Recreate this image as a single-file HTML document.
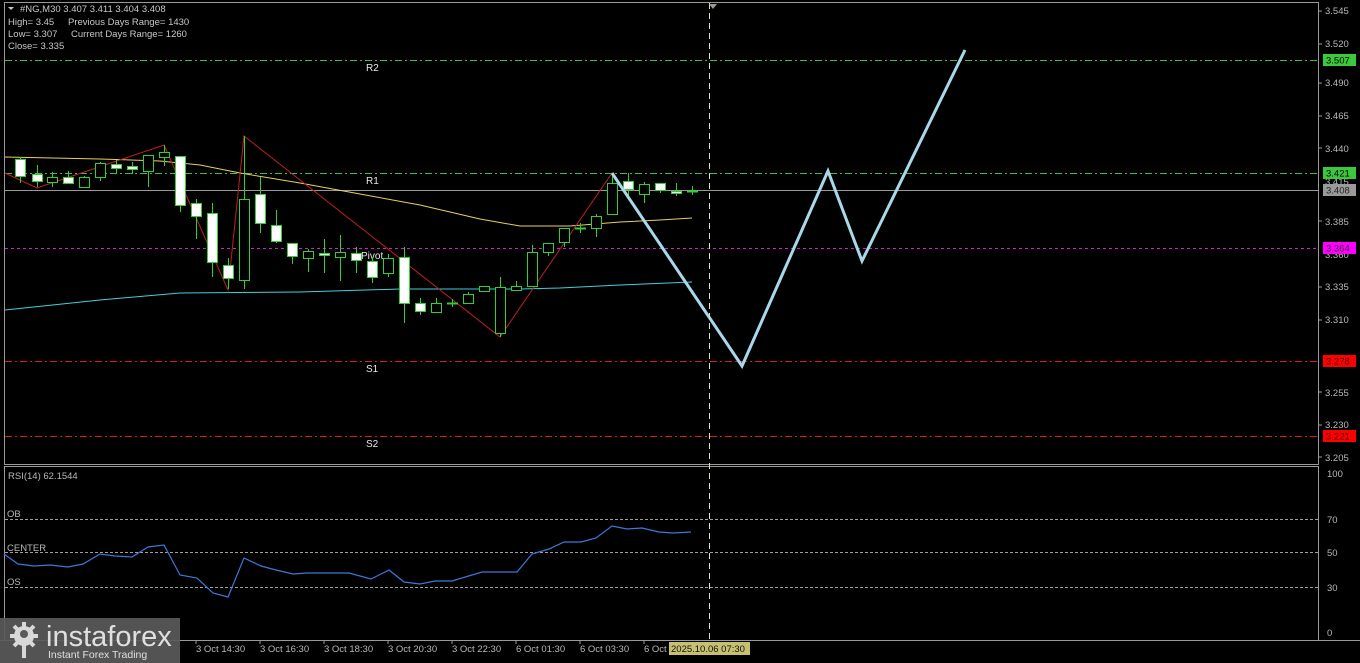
<!DOCTYPE html>
<html><head><meta charset="utf-8"><style>
html,body{margin:0;padding:0;background:#000;width:1360px;height:663px;overflow:hidden}
svg{display:block;font-family:"Liberation Sans",sans-serif}
</style></head><body>
<svg id="s" width="1360" height="663" viewBox="0 0 1360 663" xmlns="http://www.w3.org/2000/svg">
<rect width="1360" height="663" fill="#000"/>
<!-- frames -->
<rect x="4.5" y="2.5" width="1314" height="462" fill="none" stroke="#9a9a9a"/>
<rect x="4.5" y="466.5" width="1314" height="174" fill="none" stroke="#9a9a9a"/>
<line x1="0" y1="640.5" x2="1360" y2="640.5" stroke="#9a9a9a"/>
<!-- horizontal levels -->
<line x1="5" y1="60.5" x2="1318" y2="60.5" stroke="#3fbf3f" stroke-dasharray="7,3,2,3"/>
<line x1="5" y1="173.5" x2="1318" y2="173.5" stroke="#3fbf3f" stroke-dasharray="7,3,2,3"/>
<line x1="5" y1="190.5" x2="1318" y2="190.5" stroke="#9a9a9a"/>
<line x1="5" y1="248.5" x2="1318" y2="248.5" stroke="#d020d0" stroke-dasharray="3,3"/>
<line x1="5" y1="361.5" x2="1318" y2="361.5" stroke="#d02020" stroke-dasharray="7,3,2,3"/>
<line x1="5" y1="436.5" x2="1318" y2="436.5" stroke="#d02020" stroke-dasharray="7,3,2,3"/>
<g fill="#e8e8e8" font-size="10">
<text x="366" y="71">R2</text><text x="366" y="184">R1</text><text x="361" y="259">Pivot</text>
<text x="366" y="372">S1</text><text x="366" y="447">S2</text>
</g>
<!-- MAs -->
<polyline fill="none" stroke="#e8d060" points="5,157 100,159 160,161 200,165 240,173 300,183 360,194 420,205 480,219 520,226 570,226 620,222 660,220 692,218"/>
<polyline fill="none" stroke="#40d0e0" points="5,310 100,300 180,293 300,292 400,289 460,289 520,289 560,288 620,285 692,282"/>
<polyline fill="none" stroke="#c02020" points="5,173 37,188 164,145 228,290 244,136 500,337 612,173"/>
<g id="candles"></g>
<polyline fill="none" stroke="#a8d8ea" stroke-width="3" points="612,173 742,366 828,171 862,261 965,50"/>
<!-- vertical cursor -->
<line x1="709.5" y1="3" x2="709.5" y2="640" stroke="#e0e0c0" stroke-dasharray="6,4"/>
<polygon points="709,4 717,4 713,9" fill="#9a9a9a"/>
<!-- header -->
<g fill="#c8c8c8" font-size="9.5">
<polygon points="8,7 14,7 11,10" fill="#c8c8c8"/>
<text x="20" y="12">#NG,M30  3.407 3.411 3.404 3.408</text>
<text x="8" y="25">High= 3.45</text><text x="68" y="25">Previous Days Range= 1430</text>
<text x="8" y="37">Low= 3.307</text><text x="71" y="37">Current Days Range= 1260</text>
<text x="8" y="49">Close= 3.335</text>
</g>
<!-- price axis -->
<g fill="#b8b8b8" font-size="9.5">
<text x="1325" y="14">3.545</text><text x="1325" y="47">3.520</text><text x="1325" y="86">3.490</text>
<text x="1325" y="119">3.465</text><text x="1325" y="152">3.440</text><text x="1325" y="185">3.415</text>
<text x="1325" y="225">3.385</text><text x="1325" y="258">3.360</text><text x="1325" y="290">3.335</text>
<text x="1325" y="323">3.310</text><text x="1325" y="396">3.255</text><text x="1325" y="428">3.230</text>
<text x="1325" y="461">3.205</text>
<text x="1327" y="477">100</text><text x="1327" y="523">70</text><text x="1327" y="556">50</text>
<text x="1327" y="591">30</text><text x="1327" y="636">0</text>
</g>
<g stroke="#9a9a9a">
<line x1="1318" y1="11" x2="1322" y2="11"/><line x1="1318" y1="44" x2="1322" y2="44"/><line x1="1318" y1="83" x2="1322" y2="83"/><line x1="1318" y1="116" x2="1322" y2="116"/><line x1="1318" y1="148" x2="1322" y2="148"/><line x1="1318" y1="221" x2="1322" y2="221"/><line x1="1318" y1="287" x2="1322" y2="287"/><line x1="1318" y1="320" x2="1322" y2="320"/><line x1="1318" y1="392" x2="1322" y2="392"/><line x1="1318" y1="425" x2="1322" y2="425"/><line x1="1318" y1="457" x2="1322" y2="457"/>
</g>
<rect x="1323" y="54" width="33" height="12" fill="#3cc83c"/><text x="1326" y="63.5" font-size="9.5" fill="#000">3.507</text>
<rect x="1323" y="167" width="33" height="12" fill="#3cc83c"/><text x="1326" y="176.5" font-size="9.5" fill="#000">3.421</text>
<rect x="1323" y="184" width="33" height="12" fill="#9a9a9a"/><text x="1326" y="193.5" font-size="9.5" fill="#222">3.408</text>
<rect x="1323" y="242" width="33" height="12" fill="#ff00ff"/><text x="1326" y="251.5" font-size="9.5" fill="#333">3.364</text>
<rect x="1323" y="355" width="33" height="12" fill="#ff0000"/><text x="1326" y="364.5" font-size="9.5" fill="#500">3.278</text>
<rect x="1323" y="430" width="33" height="12" fill="#ff0000"/><text x="1326" y="439.5" font-size="9.5" fill="#500">3.221</text>
<!-- RSI -->
<g stroke="#a0a0a0" stroke-dasharray="3,2"><line x1="5" y1="519.5" x2="1318" y2="519.5"/><line x1="5" y1="552.5" x2="1318" y2="552.5"/><line x1="5" y1="587.5" x2="1318" y2="587.5"/></g>
<g fill="#b8b8b8" font-size="9.5"><text x="8" y="479">RSI(14) 62.1544</text><text x="7" y="517">OB</text><text x="7" y="551">CENTER</text><text x="7" y="585">OS</text></g>
<polyline fill="none" stroke="#3c78d8" stroke-width="1.2" points="4,554 18,564 34,566 50,565 68,567 83,564 100,554 115,556 132,557 148,547 164,545 180,575 197,578 213,593 228,597 244,558 261,566 276,570 293,574 307,573 331,573 349,573 371,579 389,570 404,582 420,584 435,581 452,581 482,572 517,572 532,554 549,549 564,542 581,542 596,538 612,526 627,529 642,528 659,532 673,533 691,532"/>
<!-- time axis -->
<g fill="#b8b8b8" font-size="9.5">
<text x="196" y="652">3 Oct 14:30</text><text x="260" y="652">3 Oct 16:30</text><text x="324" y="652">3 Oct 18:30</text>
<text x="388" y="652">3 Oct 20:30</text><text x="452" y="652">3 Oct 22:30</text><text x="516" y="652">6 Oct 01:30</text>
<text x="580" y="652">6 Oct 03:30</text><text x="644" y="652">6 Oct</text>
</g>
<g stroke="#9a9a9a"><line x1="196" y1="640" x2="196" y2="644"/><line x1="260" y1="640" x2="260" y2="644"/><line x1="324" y1="640" x2="324" y2="644"/><line x1="388" y1="640" x2="388" y2="644"/><line x1="452" y1="640" x2="452" y2="644"/><line x1="516" y1="640" x2="516" y2="644"/><line x1="580" y1="640" x2="580" y2="644"/><line x1="644" y1="640" x2="644" y2="644"/></g>
<rect x="669" y="642" width="81" height="13" fill="#c8c070"/>
<text x="671" y="652" font-size="9.5" fill="#111">2025.10.06 07:30</text>
<!-- logo -->
<rect x="0" y="618" width="180" height="45" fill="#5a5a5a" opacity="0.92"/>
<g fill="#d8d8d8">
<circle cx="24" cy="636" r="10"/>
<g stroke="#d8d8d8" stroke-width="4"><line x1="24" y1="622" x2="24" y2="650"/><line x1="10" y1="636" x2="38" y2="636"/><line x1="14" y1="626" x2="34" y2="646"/><line x1="34" y1="626" x2="14" y2="646"/></g>
<circle cx="24" cy="634" r="4" fill="#5a5a5a"/>
<rect x="22" y="640" width="4" height="18"/>
</g>
<text x="46" y="646" font-size="29" fill="#e0e0e0">instaforex</text>
<text x="48" y="658" font-size="10.5" fill="#e0e0e0">Instant Forex Trading</text>
</svg>
<script>
var C=[[20,159,176,157,183,1],[37,174,181,165,187,1],[52,177,182,172,187,0],[68,177,183,171,184,1],[84,177,187,176,188,0],[100,163,177,162,181,0],[116,164,168,160,173,1],[132,166,169,162,174,1],[148,155,171,155,187,0],[164,152,157,145,166,0],[180,156,205,156,212,1],[196,203,216,199,239,1],[212,213,262,203,277,1],[228,265,278,258,289,1],[244,199,280,136,289,0],[260,194,223,177,233,1],[276,225,241,210,243,1],[292,243,256,243,264,1],[308,251,258,249,272,0],[324,253,255,239,273,1],[340,252,257,235,281,0],[356,253,260,247,273,1],[372,261,277,257,283,1],[388,258,273,254,277,0],[404,257,303,247,323,1],[420,303,311,298,315,1],[436,303,312,298,312,0],[452,303,303,299,307,2],[468,294,303,292,304,0],[484,286,291,286,291,0],[500,287,333,277,337,0],[516,286,290,281,290,0],[532,252,286,245,286,0],[548,243,252,243,256,0],[564,228,242,228,247,0],[580,228,228,223,233,2],[596,216,228,214,237,0],[612,183,214,173,215,0],[628,181,189,173,196,1],[644,184,194,182,203,0],[660,183,190,183,193,1],[676,191,193,183,196,1],[692,191,191,186,195,2]];
var g=document.getElementById('candles'),h='';
C.forEach(function(c){var x=c[0];h+='<line x1="'+(x+.5)+'" y1="'+c[3]+'" x2="'+(x+.5)+'" y2="'+c[4]+'" stroke="#30d030"/>';
if(c[5]==2)h+='<line x1="'+(x-5)+'" y1="'+(c[1]+.5)+'" x2="'+(x+6)+'" y2="'+(c[1]+.5)+'" stroke="#30d030" stroke-width="2"/>';
else h+='<rect x="'+(x-4.5)+'" y="'+(c[1]+.5)+'" width="10" height="'+Math.max(2,c[2]-c[1])+'" fill="'+(c[5]?'#fff':'#000')+'" stroke="#30d030"/>';});
g.innerHTML=h;
</script>
</body></html>
